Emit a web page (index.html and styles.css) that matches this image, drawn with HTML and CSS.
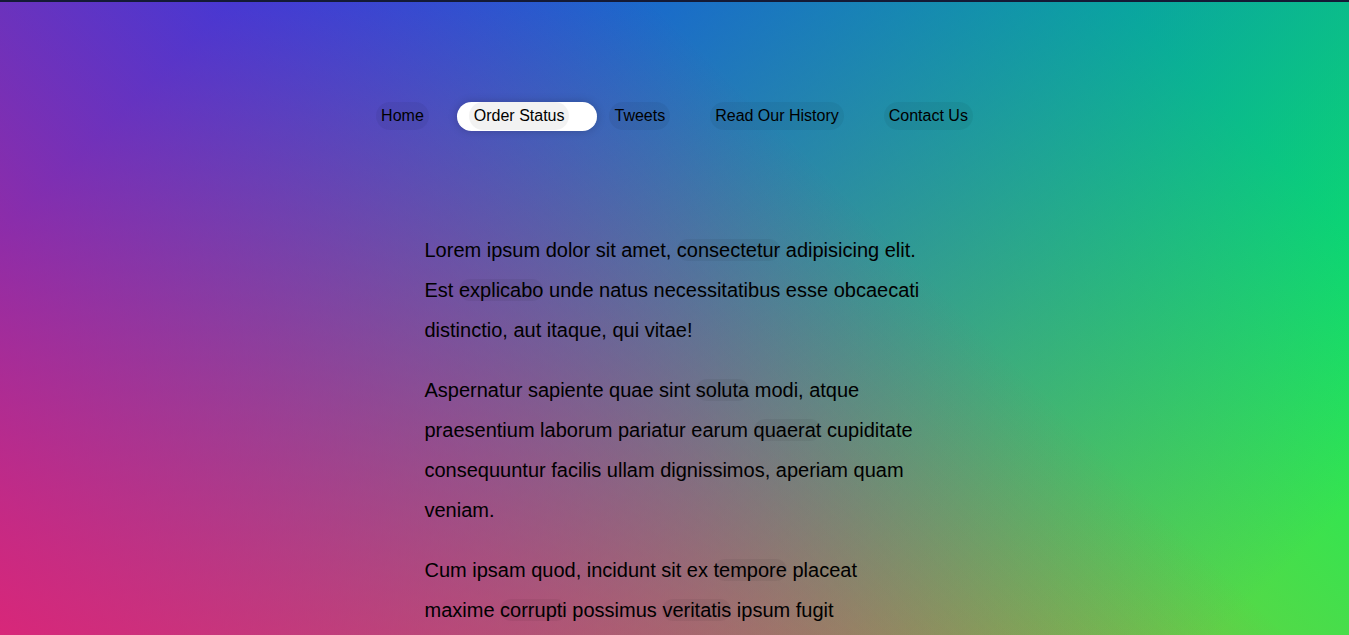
FILE: index.html
```html
<!DOCTYPE html>
<html lang="en">
<head>
<meta charset="UTF-8">
<title>👀👀👀Follow Along Nav</title>
<link rel="stylesheet" href="styles.css">
</head>
<body>
  <nav>
    <ul class="menu">
      <li><a href="#">Home</a></li>
      <li><a href="#">Order Status</a></li>
      <li><a href="#">Tweets</a></li>
      <li><a href="#">Read Our History</a></li>
      <li><a href="#">Contact Us</a></li>
    </ul>
  </nav>

  <div class="wrapper">
    <p>Lorem ipsum dolor sit amet, <a href="#">consectetur</a> adipisicing elit. Est <a href="#">explicabo</a> unde natus necessitatibus esse obcaecati distinctio, aut itaque, qui vitae!</p>
    <p>Aspernatur sapiente quae sint <a href="#">soluta</a> modi, atque praesentium laborum pariatur earum <a href="#">quaerat</a> cupiditate consequuntur facilis ullam dignissimos, aperiam quam veniam.</p>
    <p>Cum ipsam quod, incidunt sit ex <a href="#">tempore</a> placeat maxime <a href="#">corrupti</a> possimus <a href="#">veritatis</a> ipsum fugit recusandae est doloremque? Hic, <a href="#">quibusdam</a>, nulla.</p>
    <p>Esse quibusdam, ad, ducimus cupiditate <a href="#">nulla</a>, quae magni odit <a href="#">totam</a> ut consequatur eveniet sunt quam provident sapiente dicta neque quod.</p>
    <p>Aliquam <a href="#">dicta</a> sequi culpa fugiat <a href="#">consequuntur</a> pariatur optio ad minima, maxime <a href="#">odio</a>, distinctio magni impedit tempore enim repellendus <a href="#">repudiandae</a> quas!</p>
  </div>

  <span class="highlight"></span>
</body>
</html>
```

FILE: styles.css
```css
html {
  box-sizing: border-box;
}

*, *::before, *::after {
  box-sizing: inherit;
}

body {
  min-height: 100vh;
  margin: 0;
  border-top: 2px solid #141a36;
  font-family: "Liberation Sans", Arial, sans-serif;
  color: #000;
  background:
    linear-gradient(45deg, hsla(340, 100%, 55%, 1) 0%, hsla(340, 100%, 55%, 0) 70%),
    linear-gradient(135deg, hsla(225, 95%, 50%, 1) 10%, hsla(225, 95%, 50%, 0) 80%),
    linear-gradient(225deg, hsla(140, 90%, 50%, 1) 10%, hsla(140, 90%, 50%, 0) 80%),
    linear-gradient(315deg, hsla(35, 95%, 55%, 1) 100%, hsla(35, 95%, 55%, 0) 70%);
}

.wrapper {
  margin: 0 auto;
  max-width: 500px;
  font-size: 20px;
  line-height: 2;
}

a {
  text-decoration: none;
  color: #000;
  background: rgba(0, 0, 0, 0.05);
  border-radius: 20px;
}

.menu {
  padding: 0;
  display: flex;
  list-style: none;
  justify-content: center;
  margin: 100px 0;
}

.menu a {
  display: inline-block;
  padding: 5px;
  margin: 0 20px;
  color: #000;
}

.highlight {
  position: absolute;
  top: 102px;
  left: 457px;
  width: 140px;
  height: 29px;
  z-index: -1;
  display: block;
  background: #fff;
  border-bottom: 2px solid #fff;
  border-radius: 20px;
  box-shadow: 0 0 10px rgba(0, 0, 0, 0.2);
}
```
